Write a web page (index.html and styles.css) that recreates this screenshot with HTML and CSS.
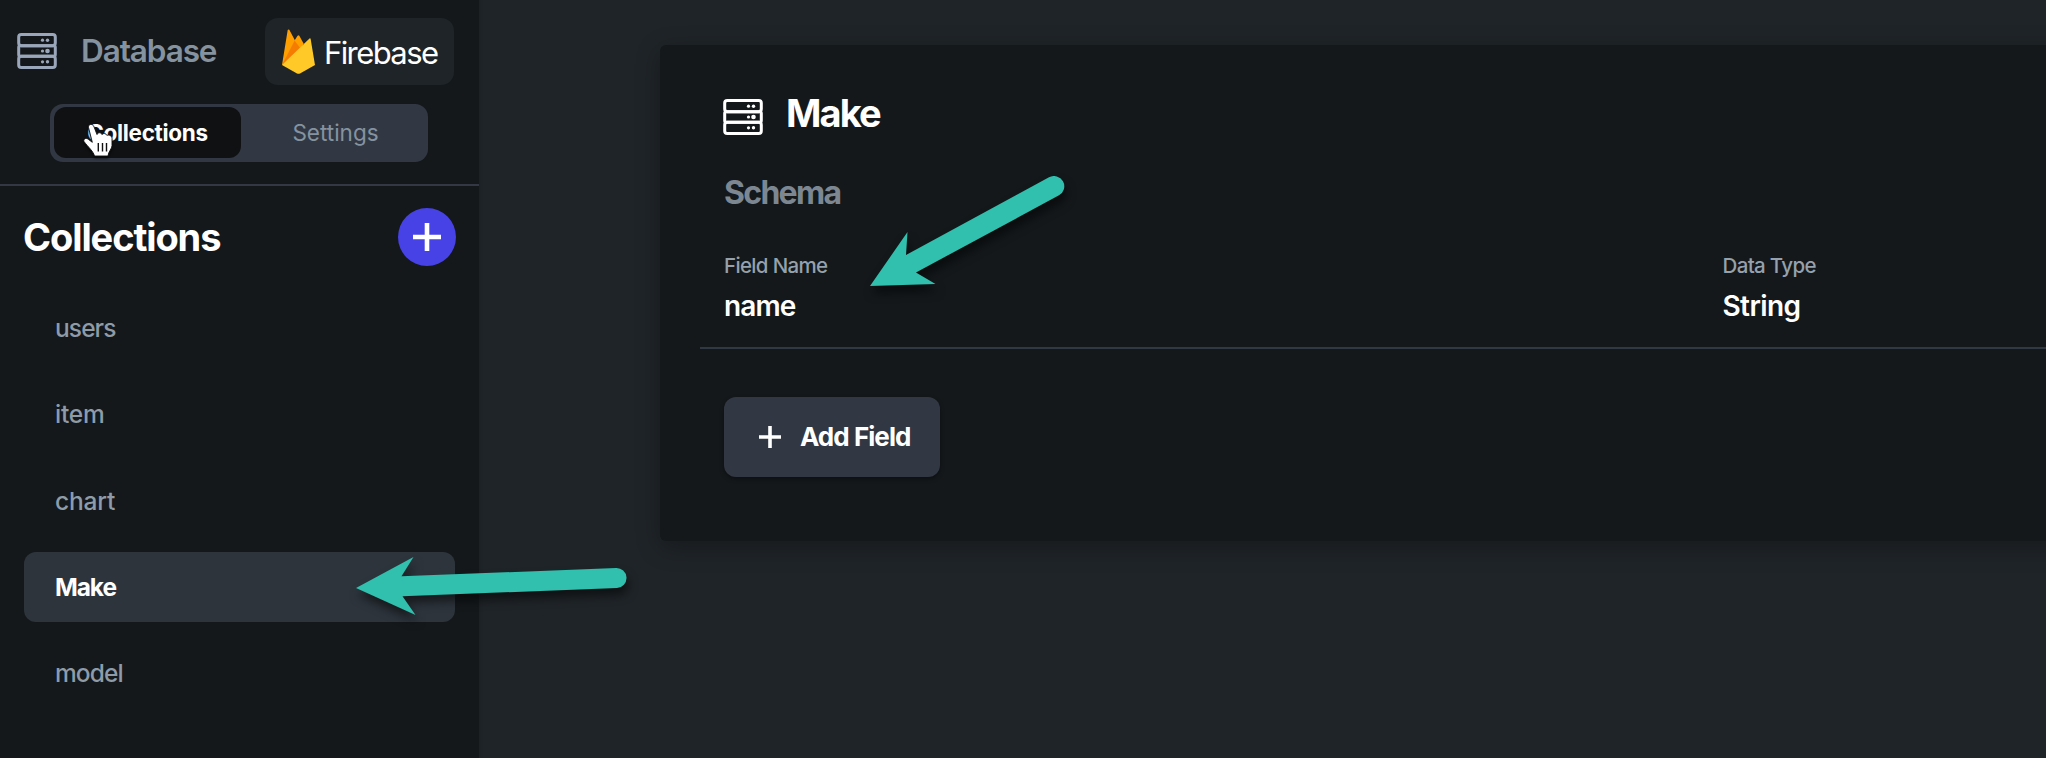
FILE: index.html
```html
<!DOCTYPE html>
<html lang="en">
<head>
<meta charset="utf-8">
<title>Database</title>
<link rel="stylesheet" href="styles.css">
</head>
<body>
<svg class="defs" width="0" height="0">
  <symbol id="server" viewBox="0 0 40 36">
    <g fill="none" stroke="currentColor" stroke-width="3">
      <rect x="1.700" y="1.500" width="36.600" height="11.200" rx="2.600"/>
      <rect x="1.700" y="12.700" width="36.600" height="10.600" rx="1.800"/>
      <rect x="1.700" y="23.300" width="36.600" height="11.200" rx="2.600"/>
    </g>
    <g fill="currentColor">
      <circle cx="25.500" cy="7.200" r="1.600"/><circle cx="30.500" cy="7.200" r="1.700"/>
      <circle cx="25.500" cy="18" r="1.600"/><circle cx="30.500" cy="18" r="2.300"/>
      <circle cx="25.500" cy="28.800" r="1.600"/><circle cx="30.500" cy="28.800" r="1.700"/>
    </g>
  </symbol>
</svg>
<div class="app">
  <aside class="sidebar">
    <header class="sidebar-head">
      <div class="brand-row">
        <svg class="server-icon muted"><use href="#server"/></svg>
        <span class="brand">Database</span>
        <div class="firebase">
          <svg class="flame" viewBox="0 0 33 45">
            <path fill="#ffa000" d="M0 36 5.700.9Q6.300 0 7.300.8L13 11.500 18 20 3 34Z"/>
            <path fill="#f57c00" d="M0 36 12.700 11.500 21 15 20 21Z"/>
            <path fill="#ffa000" d="M12.500 11.500 15.600 6.700Q16.500 6 17.300 6.700L21.700 14.800 18.200 19Z"/>
            <path fill="#ffca28" d="M0 36 27.500 9.400Q28.300 9 28.600 9.800L33 36 18 44.500Q16.500 45.200 15 44.500Z"/>
          </svg>
          <span class="firebase-name">Firebase</span>
        </div>
      </div>
      <div class="tabs">
        <span class="tab tab-active">Collections</span>
        <span class="tab tab-idle">Settings</span>
      </div>
    </header>
    <div class="list-head">
      <h2 class="list-title">Collections</h2>
      <button class="add-btn"><svg class="add-plus" viewBox="0 0 28 28"><path d="M14 0V28M0 14H28" stroke="#fff" stroke-width="4.600"/></svg></button>
    </div>
    <nav class="list">
      <span class="item">users</span>
      <span class="item item-wide">item</span>
      <span class="item item-wide">chart</span>
      <span class="item item-active">Make</span>
      <span class="item">model</span>
    </nav>
  </aside>
  <main class="main">
    <section class="card">
      <div class="card-head">
        <svg class="server-icon"><use href="#server"/></svg>
        <h1 class="card-title">Make</h1>
      </div>
      <h3 class="schema">Schema</h3>
      <div class="field-row">
        <div class="field"><span class="label">Field Name</span><span class="value value-name">name</span></div>
        <div class="field"><span class="label">Data Type</span><span class="value value-type">String</span></div>
      </div>
      <button class="add-field">
        <svg class="field-plus" viewBox="0 0 22 22"><path d="M11 0V22M0 11H22" stroke="#fff" stroke-width="3.600"/></svg>
        <span class="add-field-text">Add Field</span>
      </button>
    </section>
  </main>
</div>
<svg class="overlay" viewBox="0 0 2046 758">
  <g class="arrows" fill="#31bfae">
    <path d="M870 286 907.500 232 906 255 1049 177.300A10 10 0 0 1 1059 195.300L916 272.500 935.500 284Z"/>
    <path d="M356 588 413.500 557 401.500 576.300 616 568A10 10 0 0 1 617 588L402.500 596.300 415.500 615Z"/>
  </g>
  <g class="cursor">
    <path d="M88.500 127.500C88 123.500 93 123.500 94 126.800L97 134.500C98 132 101.300 132.300 101.900 134.500 103.500 132.800 106.300 133.400 106.900 135.400 109 134.400 112 135.800 112 138.500V145.500C112 149 108.500 151 108 156H94.500C93.500 151.500 88.500 147.500 84 141.500 83 139 86 137.300 88.300 139.300L92.300 142.300Z" fill="#fff" stroke="#111" stroke-width=".9"/>
    <path d="M98.300 143V151.500M102.500 143V151.500M106.500 143V151.500" stroke="#111" stroke-width="1.400"/>
  </g>
</svg>
</body>
</html>
```
FILE: styles.css
```css
* { box-sizing: border-box; }
body {
  margin: 0;
  background: #1f2428;
  color: #fff;
  font-family: Inter, "Liberation Sans", sans-serif;
  overflow: hidden;
}
h1, h2, h3 { margin: 0; }
button { border: 0; color: inherit; font-family: inherit; padding: 0; }
.defs, .overlay { position: absolute; }
.app { display: flex; height: 758px; overflow: hidden; }

.sidebar { width: 479px; flex: none; background: #14181b; box-shadow: 0 0 4px rgba(0,0,0,.2); }
.sidebar-head { height: 186px; padding-top: 18px; border-bottom: 2px solid #323944; }
.brand-row { display: flex; align-items: center; height: 67px; padding: 0 25px 0 17px; }
.server-icon { width: 40px; height: 36px; flex: none; color: #fff; }
.muted { color: #9aa7bb; margin-bottom: 2px; }
.brand { width: 184px; margin-left: 24px; padding-bottom: 2px; font-size: 31.5px; font-weight: 600; letter-spacing: -1.1px; color: #8593a0; }
.firebase { display: flex; align-items: center; width: 189px; height: 67px; padding-left: 17px; border-radius: 13px; background: #1f2428; }
.flame { width: 33px; height: 45px; flex: none; }
.firebase-name { margin-left: 9px; font-size: 31px; letter-spacing: -1.6px; padding-top: 2px; }
.tabs { display: flex; width: 378px; height: 58px; margin: 19px 0 0 50px; padding: 3px 4px 4px; border-radius: 13px; background: #323843; }
.tab { display: flex; align-items: center; justify-content: center; font-size: 22.5px; }
.tab-active { width: 187px; border-radius: 12px; background: #101113; font-weight: 700; letter-spacing: -.3px; }
.tab-idle { flex: 1; padding-left: 6px; color: #8593a0; letter-spacing: 0; }

.list-head { display: flex; align-items: center; justify-content: space-between; height: 102px; padding: 0 23px 0 23px; }
.list-title { padding-bottom: 1px; font-size: 38px; font-weight: 700; letter-spacing: -1.1px; }
.add-btn { display: grid; place-items: center; width: 58px; height: 58px; border-radius: 50%; background: #4742e5; }
.add-plus { width: 28px; height: 28px; }
.list { display: flex; flex-direction: column; gap: 16px; padding: 5px 24px 0; }
.item { display: flex; align-items: center; height: 70.300px; padding-left: 31px; border-radius: 12px; font-size: 24.500px; font-weight: 500; letter-spacing: -.9px; color: #8e9ba8; }
.item-wide { letter-spacing: -.2px; }
.item-active { background: #2d343c; color: #fff; font-weight: 700; letter-spacing: -1.1px; }

.main { flex: 1; padding: 45px 0 0 181px; }
.card { width: 1500px; height: 496px; padding: 45px 0 0 40px; border-radius: 6px; background: #14181b; box-shadow: 0 6px 24px rgba(0,0,0,.28); }
.card-head { display: flex; padding: 9px 0 0 23px; height: 70px; }
.card-title { margin-left: 23px; font-size: 38px; line-height: 46px; margin-top: -9px; font-weight: 700; letter-spacing: -1.9px; }
.schema { padding-left: 24px; font-size: 32px; line-height: 66px; font-weight: 700; letter-spacing: -1.7px; color: #7c8792; }
.field-row { display: grid; grid-template-columns: 998.500px 1fr; height: 123px; padding: 25px 0 0 24px; border-bottom: 2px solid #303844; }
.field { display: flex; flex-direction: column; }
.label { font-size: 20.500px; line-height: 30px; font-weight: 500; letter-spacing: -.65px; color: #95a1ac; }
.value { font-size: 28px; line-height: 40px; margin-top: 5px; font-weight: 600; letter-spacing: -.9px; }
.value-type { letter-spacing: -.6px; }
.add-field { display: flex; align-items: center; width: 216px; height: 80px; margin: 48px 0 0 24px; padding-left: 35px; border-radius: 12px; background: #323843; box-shadow: 0 2px 4px rgba(0,0,0,.35); font-size: 26px; font-weight: 700; letter-spacing: -.95px; }
.field-plus { width: 22px; height: 22px; margin-right: 19px; }
.add-field-text { padding-bottom: 2px; }

.overlay { left: 0; top: 0; width: 2046px; height: 758px; pointer-events: none; }
.arrows { filter: drop-shadow(2px 7px 5px rgba(0,0,0,.5)); }
.cursor { filter: drop-shadow(0 2px 1px rgba(0,0,0,.6)); }
```
